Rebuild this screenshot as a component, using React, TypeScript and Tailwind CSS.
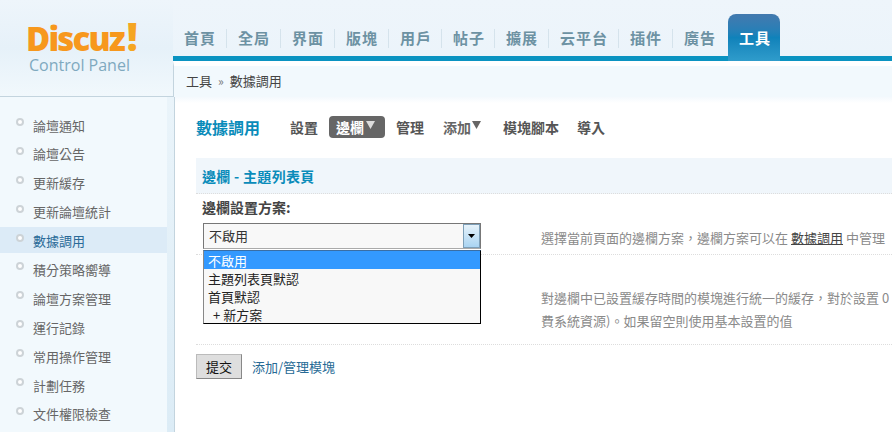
const tabs = [
  { t: "首頁", c: "w-[54px]" },
  { t: "全局", c: "w-[54px]" },
  { t: "界面", c: "w-[54px]" },
  { t: "版塊", c: "w-[54px]" },
  { t: "用戶", c: "w-[53px]" },
  { t: "帖子", c: "w-[53px]" },
  { t: "擴展", c: "w-[54px]" },
  { t: "云平台", c: "w-[70px]" },
  { t: "插件", c: "w-[54px]" },
  { t: "廣告", c: "w-[55px]" },
];

const side = ["論壇通知", "論壇公告", "更新緩存", "更新論壇統計", "數據調用", "積分策略嚮導", "論壇方案管理", "運行記錄", "常用操作管理", "計劃任務", "文件權限檢查"];

const menu = ["不啟用", "主題列表頁默認", "首頁默認"];

export default function App() {
  return (
    <div className="relative w-[892px] h-[432px] overflow-hidden bg-white text-[13px] leading-[18px] text-[#555] font-['Noto_Sans_CJK_TC','Liberation_Sans',sans-serif]">
      <header className="flex h-[97px] border-b border-[#c3d4de] bg-gradient-to-b from-[#eef5fb] to-[#eaf3fa]">
        <div className="w-[173px] shrink-0 pl-[26px] pt-[17px] bg-gradient-to-b from-[#eef5fb] via-[#e6f1f9] to-[#f1f8fc]">
          <div className="h-[38px] leading-[38px] font-['Open_Sans',sans-serif] font-extrabold text-[33px] tracking-[-1.800px] text-[#f7981d] whitespace-nowrap">
            Discuz<span className="ml-[3px] text-[38px] text-[#f5a623]">!</span>
          </div>
          <div className="mt-[1px] pl-[3px] leading-[18px] font-['Open_Sans',sans-serif] text-[16px] text-[#7fa9bf] whitespace-nowrap">Control Panel</div>
        </div>
        <div className="flex-1 flex flex-col min-w-0">
          <nav className="h-[42px] mt-[14px] flex items-stretch font-bold text-[#6d92a3] text-[15px] tracking-[1px]">
            {tabs.map((x, i) => (
              <div key={x.t} className={`${x.c} shrink-0 flex items-center mt-[13px] h-[22px] pl-[11px] whitespace-nowrap`}>
                <span className="flex-1">{x.t}</span>
                {i < tabs.length - 1 && <span className="w-px h-[19px] bg-[#d5e3ec]" />}
              </div>
            ))}
            <div className="relative z-10 w-[52px] h-[47px] rounded-t-[8px] bg-gradient-to-b from-[#4279ae] via-[#0f82ba] to-[#2f9ccb] pl-[11px] text-white leading-[48px]">工具</div>
          </nav>
          <div className="h-[5px] bg-[#0a93c1]" />
          <div className="flex-1 border-l border-[#c3d4de] border-t-[5px] border-t-white bg-[#f2f9fd] pl-[12px] flex items-center text-[13px] text-[#444] -mb-[3px] pb-[3px]">
            工具<span className="mx-[6px] text-[12px] text-[#777]">»</span>數據調用
          </div>
        </div>
      </header>

      <div className="flex h-[335px]">
        <aside className="w-[175px] shrink-0 flex border-r border-[#c3d4de]">
          <div className="w-[167px] bg-[#f2f9fd] pt-[14.500px]">
            {side.map((s) => {
              const on = s === "數據調用";
              return (
                <div key={s} className={`h-[26px] mb-[2.900px] pl-[16px] flex items-center whitespace-nowrap ${on ? "bg-[#dcebf7] text-[#2a6a98]" : "text-[#666]"}`}>
                  <span className="w-[8px] h-[8px] rounded-full border-[2px] border-[#cdd3d7] bg-white -mt-[5px] shrink-0" />
                  <span className="ml-[9px] mt-[2px]">{s}</span>
                </div>
              );
            })}
          </div>
          <div className="flex-1 bg-gradient-to-b from-[#eaf4fa] to-[#dcecf6]" />
        </aside>

        <main className="flex-1 min-w-0 pl-[21px] bg-gradient-to-b from-[#f4f9fd] to-white to-[6px]">
          <div className="flex items-center h-[22px] mt-[19px] font-bold whitespace-nowrap text-[14px]">
            <span className="w-[94px] text-[16px] text-[#0a8cba]">數據調用</span>
            <span className="text-[#555] w-[39px]">設置</span>
            <span className="w-[56px] h-[22px] rounded-[4px] bg-[#666] text-white flex items-center pl-[7px]">
              邊欄<svg className="ml-[2px] -mt-[4px]" width="9" height="8" viewBox="0 0 9 8"><path d="M0 0h9L4.500 8z" fill="#ddd" /></svg>
            </span>
            <span className="ml-[11px] w-[47px]">管理</span>
            <span className="w-[60px] flex items-center text-[#666]">
              添加<svg className="ml-[1px] -mt-[4px]" width="9" height="8" viewBox="0 0 9 8"><path d="M0 0h9L4.500 8z" fill="#666" /></svg>
            </span>
            <span className="w-[74px]">模塊腳本</span>
            <span>導入</span>
          </div>

          <div className="mt-[20px] h-[36px] pl-[6px] flex items-center bg-[#f0f6fb] border-b border-dotted border-[#ddd] font-bold text-[14px] tracking-[0.300px] text-[#0a8cba] whitespace-pre">邊欄 - 主題列表頁</div>

          <div className="pl-[6px] h-[26px] font-bold text-[14px] text-[#444] flex items-center">邊欄設置方案:</div>

          <div className="flex h-[35px] border-b border-dotted border-[#ddd] whitespace-nowrap pt-[3px]">
            <div className="relative ml-[7px] w-[278px] h-[26px] border border-[#777] border-b-[#aaa] bg-[#f8f8f8] flex items-center pl-[5px] text-[#333] shrink-0">
              不啟用
              <div className="absolute right-0 top-0 w-[17px] h-[24px] border border-[#7d9fb8] bg-gradient-to-b from-[#e6f2fa] to-[#a9d4f2] flex items-center justify-center">
                <svg width="7" height="4" viewBox="0 0 7 4"><path d="M0 0h7L3.500 4z" fill="#000" /></svg>
              </div>
              <div className="absolute z-20 -left-px top-[26px] w-[278px] border border-black border-l-[#888] border-t-[#3a6ea5] bg-[#f8f8f8] text-[#222] text-[13px] pl-[1px]">
                {menu.map((m, i) => (
                  <div key={m} className={`h-[18px] leading-[20px] pl-[3px] ${i === 0 ? "bg-[#3399ff] text-white -ml-px pl-[4px]" : ""}`}>{m}</div>
                ))}
                <div className="h-[18px] leading-[20px] pl-[8px]">+ 新方案</div>
              </div>
            </div>
            <div className="ml-[60px] text-[#8a8a8a] flex items-center pb-[2px]">
              選擇當前頁面的邊欄方案，邊欄方案可以在<span className="mx-[3px] underline text-[#444]">數據調用</span>中管理
            </div>
          </div>

          <div className="flex h-[90px] border-b border-dotted border-[#ddd] pl-[345px] pt-[31px] text-[#8a8a8a] leading-[23px] whitespace-nowrap">
            <div>
              對邊欄中已設置緩存時間的模塊進行統一的緩存，對於設置 0
              <br />
              費系統資源)。如果留空則使用基本設置的值
            </div>
          </div>

          <div className="flex items-center mt-[9px]">
            <span className="w-[46px] h-[25px] flex items-center justify-center bg-[#dedede] border border-[#bbb] border-r-[#888] border-b-[#888] text-[#111]">提交</span>
            <span className="ml-[10px] text-[#276a95]">添加/管理模塊</span>
          </div>
        </main>
      </div>
    </div>
  );
}
